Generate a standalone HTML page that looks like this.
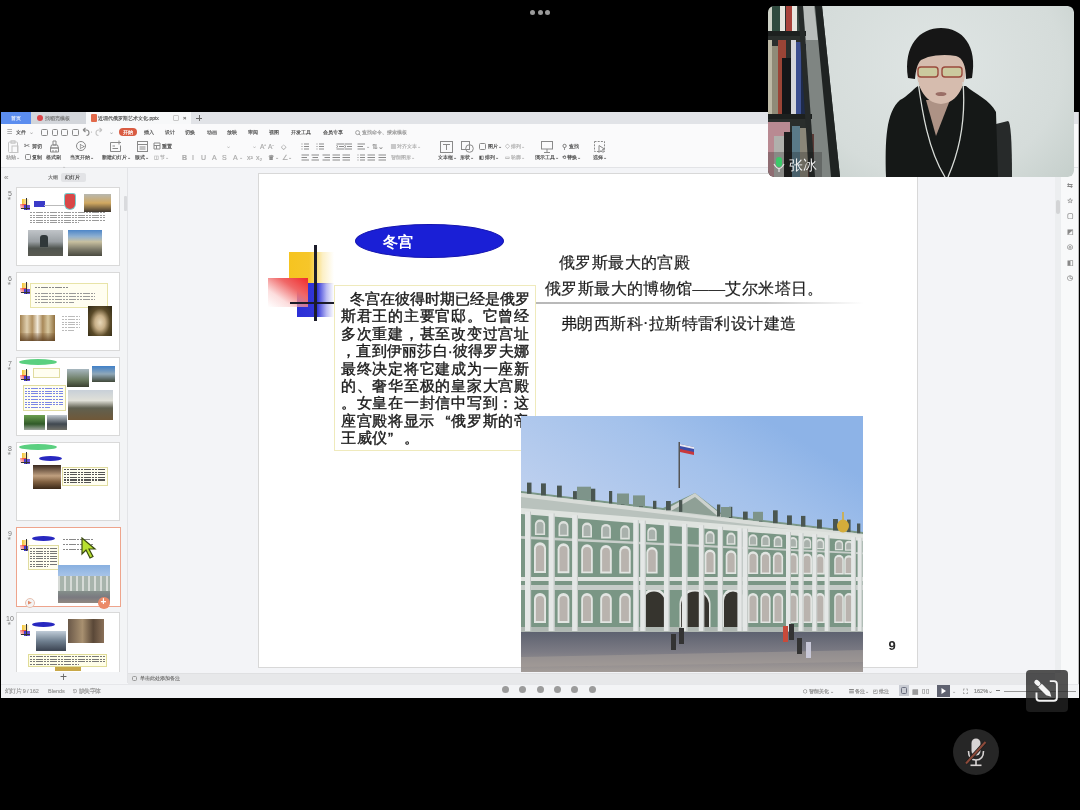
<!DOCTYPE html>
<html><head><meta charset="utf-8">
<style>
*{margin:0;padding:0;box-sizing:border-box}
html,body{width:1080px;height:810px;overflow:hidden;background:#000;font-family:"Liberation Sans",sans-serif}
.a{position:absolute}
.t{line-height:1;white-space:nowrap}
.tb{font-size:15px;font-weight:500;color:#1a1a1a;line-height:17.4px;white-space:nowrap;text-spacing-trim:space-all;-webkit-text-stroke:0.4px #1a1a1a}
.q{display:inline-block;width:15.5px;text-align:center}
.sf{font-family:"Liberation Serif",serif;font-size:16px;color:#1e1e1e;line-height:18px;white-space:nowrap;letter-spacing:0.4px;-webkit-text-stroke:0.2px #1e1e1e}
</style></head><body>
<div class="a" style="left:0;top:0;width:1080px;height:810px;filter:blur(0.3px)">
<div class="a" style="left:529.5px;top:9.7px;width:5px;height:5px;border-radius:50%;background:#9a9a9a"></div>
<div class="a" style="left:537.5px;top:9.7px;width:5px;height:5px;border-radius:50%;background:#9a9a9a"></div>
<div class="a" style="left:545.3px;top:9.7px;width:5px;height:5px;border-radius:50%;background:#9a9a9a"></div>
<div class="a" style="left:1.0px;top:112.0px;width:1078.0px;height:586.0px;background:#f4f5f7;"></div>
<div class="a" style="left:1.0px;top:112.0px;width:1078.0px;height:12.0px;background:#e1e3e7;"></div>
<div class="a" style="left:1.0px;top:112.0px;width:30.0px;height:12.0px;background:#5b8def;"></div>
<div class="a t" style="left:11.0px;top:115.8px;font-size:10.0px;color:#dce6fb;-webkit-text-stroke:0.35px #dce6fb;transform:scale(0.5);transform-origin:0 0;">首页</div>
<div class="a" style="left:31.0px;top:112.0px;width:55.0px;height:12.0px;background:#d3d6db;"></div>
<div class="a" style="left:36.7px;top:114.7px;width:6.6px;height:6.6px;border-radius:50%;background:#dc4448"></div>
<div class="a t" style="left:45.0px;top:115.8px;font-size:10.0px;color:#777;-webkit-text-stroke:0.35px #777;transform:scale(0.5);transform-origin:0 0;">找稻壳模板</div>
<div class="a" style="left:86.0px;top:112.0px;width:105.0px;height:12.0px;background:#f7f8f9;"></div>
<div class="a" style="left:90.5px;top:114.0px;width:6.2px;height:8.0px;background:#e2694a;border-radius:1px"></div>
<div class="a t" style="left:98.0px;top:115.8px;font-size:10.0px;color:#555;-webkit-text-stroke:0.35px #555;transform:scale(0.5);transform-origin:0 0;">近现代俄罗斯艺术文化.pptx</div>
<div class="a" style="left:173.0px;top:115.0px;width:6.0px;height:6.0px;background:transparent;border:1.2px solid #c8c8c8;border-radius:1.5px;border-radius:1px"></div>
<div class="a t" style="left:183.0px;top:115.3px;font-size:12.0px;color:#777;-webkit-text-stroke:0.35px #777;transform:scale(0.5);transform-origin:0 0;">×</div>
<div class="a" style="left:196.0px;top:117.9px;width:6.0px;height:1.0px;background:#666;"></div>
<div class="a" style="left:198.5px;top:115.4px;width:1.0px;height:6.0px;background:#666;"></div>
<div class="a" style="left:1.0px;top:124.0px;width:1078.0px;height:15.0px;background:#fafafb;"></div>
<div class="a t" style="left:7.0px;top:129.2px;font-size:12.0px;color:#888;-webkit-text-stroke:0.35px #888;transform:scale(0.5);transform-origin:0 0;">☰</div>
<div class="a t" style="left:16.0px;top:129.7px;font-size:10.0px;color:#505050;-webkit-text-stroke:0.35px #505050;transform:scale(0.5);transform-origin:0 0;">文件</div>
<div class="a t" style="left:29.4px;top:129.2px;font-size:12.0px;color:#aaa;-webkit-text-stroke:0.35px #aaa;transform:scale(0.5);transform-origin:0 0;">⌄</div>
<div class="a" style="left:40.5px;top:129.0px;width:7.2px;height:6.5px;background:transparent;border:1.2px solid #8a8a8a;border-radius:1.5px;"></div>
<div class="a" style="left:51.7px;top:129.0px;width:6.1px;height:6.5px;background:transparent;border:1.2px solid #8a8a8a;border-radius:1.5px;"></div>
<div class="a" style="left:61.0px;top:129.0px;width:7.3px;height:6.5px;background:transparent;border:1.2px solid #8a8a8a;border-radius:1.5px;"></div>
<div class="a" style="left:72.0px;top:129.0px;width:6.9px;height:6.5px;background:transparent;border:1.2px solid #8a8a8a;border-radius:1.5px;"></div>
<svg class="a" style="left:81px;top:127px" width="24" height="10" viewBox="0 0 24 10"><path d="M2 3 L4.5 1 M2 3 L4.5 5 M2 3 H5.5 Q8 3 8 6 Q8 8.5 5.5 8.5" fill="none" stroke="#888" stroke-width="1.1"/><circle cx="10.5" cy="5" r=".6" fill="#aaa"/><path d="M21 3 L18.5 1 M21 3 L18.5 5 M21 3 H17.5 Q15 3 15 6 Q15 8.5 17.5 8.5" fill="none" stroke="#c5c5c5" stroke-width="1.1"/></svg>
<div class="a t" style="left:109.0px;top:129.2px;font-size:12.0px;color:#aaa;-webkit-text-stroke:0.35px #aaa;transform:scale(0.5);transform-origin:0 0;">⌄</div>
<div class="a" style="left:118.7px;top:128.0px;width:18.0px;height:8.3px;background:#d95b41;border-radius:4.2px"></div>
<div class="a t" style="left:122.5px;top:129.7px;font-size:10.0px;color:#fff;-webkit-text-stroke:0.35px #fff;transform:scale(0.5);transform-origin:0 0;">开始</div>
<div class="a t" style="left:144.0px;top:130.0px;font-size:10.0px;color:#555;-webkit-text-stroke:0.35px #555;transform:scale(0.5);transform-origin:0 0;">插入</div>
<div class="a t" style="left:164.5px;top:130.0px;font-size:10.0px;color:#555;-webkit-text-stroke:0.35px #555;transform:scale(0.5);transform-origin:0 0;">设计</div>
<div class="a t" style="left:184.5px;top:130.0px;font-size:10.0px;color:#555;-webkit-text-stroke:0.35px #555;transform:scale(0.5);transform-origin:0 0;">切换</div>
<div class="a t" style="left:206.5px;top:130.0px;font-size:10.0px;color:#555;-webkit-text-stroke:0.35px #555;transform:scale(0.5);transform-origin:0 0;">动画</div>
<div class="a t" style="left:226.7px;top:130.0px;font-size:10.0px;color:#555;-webkit-text-stroke:0.35px #555;transform:scale(0.5);transform-origin:0 0;">放映</div>
<div class="a t" style="left:247.8px;top:130.0px;font-size:10.0px;color:#555;-webkit-text-stroke:0.35px #555;transform:scale(0.5);transform-origin:0 0;">审阅</div>
<div class="a t" style="left:268.9px;top:130.0px;font-size:10.0px;color:#555;-webkit-text-stroke:0.35px #555;transform:scale(0.5);transform-origin:0 0;">视图</div>
<div class="a t" style="left:291.0px;top:130.0px;font-size:10.0px;color:#555;-webkit-text-stroke:0.35px #555;transform:scale(0.5);transform-origin:0 0;">开发工具</div>
<div class="a t" style="left:323.0px;top:130.0px;font-size:10.0px;color:#555;-webkit-text-stroke:0.35px #555;transform:scale(0.5);transform-origin:0 0;">会员专享</div>
<svg class="a" style="left:355px;top:129.5px" width="6" height="6" viewBox="0 0 6 6"><circle cx="2.6" cy="2.6" r="2" fill="none" stroke="#999" stroke-width=".9"/><path d="M4 4 L5.6 5.6" stroke="#999" stroke-width=".9"/></svg>
<div class="a t" style="left:362.0px;top:130.0px;font-size:10.0px;color:#999;-webkit-text-stroke:0.35px #999;transform:scale(0.5);transform-origin:0 0;">查找命令、搜索模板</div>
<div class="a" style="left:1.0px;top:139.0px;width:1078.0px;height:29.0px;background:#fafafb;border-bottom:1px solid #e2e3e6"></div>
<svg class="a" style="left:7.0px;top:140.0px" width="12" height="13" viewBox="0 0 12 13" fill="none" stroke="#8a8a8a" stroke-width="1"><rect x="1.5" y="2" width="9" height="10.5" rx="1" stroke="#c4c4c4"/><rect x="4" y="0.8" width="4" height="2.4" stroke="#c4c4c4"/><rect x="5" y="6" width="6" height="6.5" stroke="#c4c4c4"/></svg>
<div class="a t" style="left:23.5px;top:142.0px;font-size:14.0px;color:#777;-webkit-text-stroke:0.35px #777;transform:scale(0.5);transform-origin:0 0;">✂</div>
<div class="a t" style="left:32.0px;top:143.5px;font-size:10.0px;color:#505050;-webkit-text-stroke:0.35px #505050;transform:scale(0.5);transform-origin:0 0;">剪切</div>
<svg class="a" style="left:49.0px;top:140.0px" width="11" height="13" viewBox="0 0 11 13" fill="none" stroke="#8a8a8a" stroke-width="1"><path d="M4 1 H7 V5 H4 Z M2.5 5 H8.5 L9.5 8 H1.5 Z M1.5 8 H9.5 V12 H1.5 Z M4 12 V10 M7 12 V10"/></svg>
<div class="a" style="left:76.4px;top:141.0px;width:10.0px;height:10.0px;background:transparent;border:1.2px solid #8a8a8a;border-radius:50%"></div>
<div class="a t" style="left:79.5px;top:143.0px;font-size:12.0px;color:#777;-webkit-text-stroke:0.35px #777;transform:scale(0.5);transform-origin:0 0;">▷</div>
<svg class="a" style="left:109.0px;top:140.0px" width="13" height="13" viewBox="0 0 13 13" fill="none" stroke="#8a8a8a" stroke-width="1"><path d="M9 2.5 H1.5 V11.5 H11.5 V5.5"/><path d="M10 0.5 V4.5 M8 2.5 H12"/><path d="M3.5 6 H6 M3.5 8.5 H9"/></svg>
<svg class="a" style="left:136.0px;top:140.0px" width="13" height="13" viewBox="0 0 13 13" fill="none" stroke="#8a8a8a" stroke-width="1"><rect x="1.5" y="1.5" width="10" height="10"/><path d="M1.5 4.5 H11.5 M3.5 7 H9.5 M3.5 9 H9.5"/></svg>
<svg class="a" style="left:153.0px;top:142.0px" width="8" height="8" viewBox="0 0 8 8" fill="none" stroke="#8a8a8a" stroke-width="1"><path d="M1 1 H7 V7 H1 Z M1 3.5 H7 M3.5 3.5 V7"/></svg>
<div class="a t" style="left:161.5px;top:143.5px;font-size:10.0px;color:#505050;-webkit-text-stroke:0.35px #505050;transform:scale(0.5);transform-origin:0 0;">重置</div>
<div class="a t" style="left:226.0px;top:143.0px;font-size:12.0px;color:#bbb;-webkit-text-stroke:0.35px #bbb;transform:scale(0.5);transform-origin:0 0;">⌄</div>
<div class="a t" style="left:252.0px;top:143.0px;font-size:12.0px;color:#bbb;-webkit-text-stroke:0.35px #bbb;transform:scale(0.5);transform-origin:0 0;">⌄</div>
<div class="a t" style="left:259.5px;top:142.8px;font-size:13.0px;color:#aaa;-webkit-text-stroke:0.35px #aaa;transform:scale(0.5);transform-origin:0 0;">A⁺</div>
<div class="a t" style="left:268.0px;top:142.8px;font-size:13.0px;color:#aaa;-webkit-text-stroke:0.35px #aaa;transform:scale(0.5);transform-origin:0 0;">A⁻</div>
<div class="a t" style="left:281.0px;top:142.8px;font-size:13.0px;color:#aaa;-webkit-text-stroke:0.35px #aaa;transform:scale(0.5);transform-origin:0 0;">◇</div>
<svg class="a" style="left:301.0px;top:142.5px" width="9" height="7" viewBox="0 0 9 7" fill="none" stroke="#8a8a8a" stroke-width="1"><path d="M0.5 1 H1.5 M3 1 H8 M0.5 3.5 H1.5 M3 3.5 H8 M0.5 6 H1.5 M3 6 H8"/></svg>
<svg class="a" style="left:316.0px;top:142.5px" width="9" height="7" viewBox="0 0 9 7" fill="none" stroke="#8a8a8a" stroke-width="1"><path d="M0.5 1 H1.5 M3 1 H8 M0.5 3.5 H1.5 M3 3.5 H8 M0.5 6 H1.5 M3 6 H8"/></svg>
<svg class="a" style="left:336.0px;top:142.5px" width="9" height="7" viewBox="0 0 9 7" fill="none" stroke="#8a8a8a" stroke-width="1"><path d="M0.5 1 H8 M3 3.5 H8 M0.5 6 H8 M0.5 2.5 L2 3.5 L0.5 4.5"/></svg>
<svg class="a" style="left:344.0px;top:142.5px" width="9" height="7" viewBox="0 0 9 7" fill="none" stroke="#8a8a8a" stroke-width="1"><path d="M0.5 1 H8 M3 3.5 H8 M0.5 6 H8 M0.5 2.5 L2 3.5 L0.5 4.5"/></svg>
<svg class="a" style="left:357.0px;top:142.5px" width="9" height="7" viewBox="0 0 9 7" fill="none" stroke="#8a8a8a" stroke-width="1"><path d="M0.5 1 H8 M0.5 3.5 H6 M0.5 6 H8"/></svg>
<div class="a t" style="left:366.0px;top:143.5px;font-size:10.0px;color:#999;-webkit-text-stroke:0.35px #999;transform:scale(0.5);transform-origin:0 0;">⌄</div>
<div class="a t" style="left:372.0px;top:142.8px;font-size:13.0px;color:#888;-webkit-text-stroke:0.35px #888;transform:scale(0.5);transform-origin:0 0;">⇅⌄</div>
<div class="a t" style="left:391.0px;top:143.5px;font-size:10.0px;color:#b0b0b0;-webkit-text-stroke:0.35px #b0b0b0;transform:scale(0.5);transform-origin:0 0;">▤ 对齐文本⌄</div>
<svg class="a" style="left:439.5px;top:140.5px" width="13" height="12" viewBox="0 0 13 12" fill="none" stroke="#8a8a8a" stroke-width="1"><rect x="0.5" y="0.5" width="12" height="11"/><path d="M3 3.5 H10 M6.5 3.5 V9"/></svg>
<svg class="a" style="left:461.0px;top:140.5px" width="13" height="12" viewBox="0 0 13 12" fill="none" stroke="#8a8a8a" stroke-width="1"><rect x="0.5" y="0.5" width="8" height="8"/><circle cx="8.5" cy="7.5" r="3.8"/></svg>
<div class="a" style="left:478.5px;top:143.0px;width:7.5px;height:6.5px;background:transparent;border:1.2px solid #8a8a8a;border-radius:1.5px;"></div>
<div class="a t" style="left:488.0px;top:143.5px;font-size:10.0px;color:#505050;-webkit-text-stroke:0.35px #505050;transform:scale(0.5);transform-origin:0 0;">图片⌄</div>
<div class="a t" style="left:505.0px;top:143.5px;font-size:10.0px;color:#b0b0b0;-webkit-text-stroke:0.35px #b0b0b0;transform:scale(0.5);transform-origin:0 0;">◇ 排列⌄</div>
<svg class="a" style="left:540.5px;top:140.5px" width="12" height="12" viewBox="0 0 12 12" fill="none" stroke="#8a8a8a" stroke-width="1"><rect x="0.5" y="0.5" width="11" height="7.5"/><path d="M6 8 V11.5 M3 11.5 H9"/></svg>
<div class="a t" style="left:562.0px;top:142.8px;font-size:13.0px;color:#777;-webkit-text-stroke:0.35px #777;transform:scale(0.5);transform-origin:0 0;">⚲</div>
<div class="a t" style="left:569.0px;top:143.5px;font-size:10.0px;color:#505050;-webkit-text-stroke:0.35px #505050;transform:scale(0.5);transform-origin:0 0;">查找</div>
<svg class="a" style="left:594.0px;top:140.5px" width="12" height="12" viewBox="0 0 12 12" fill="none" stroke="#8a8a8a" stroke-width="1"><rect x="0.5" y="0.5" width="10" height="10" stroke-dasharray="2 1.2"/><path d="M5 4.5 L5 11.5 L7 9.5 L9 11.5 L10 10.5 L8.2 8.8 L10.5 8 Z" fill="#fafafb"/></svg>
<div class="a t" style="left:6.0px;top:154.5px;font-size:10.0px;color:#999;-webkit-text-stroke:0.35px #999;transform:scale(0.5);transform-origin:0 0;">粘贴⌄</div>
<div class="a t" style="left:32.0px;top:154.5px;font-size:10.0px;color:#505050;-webkit-text-stroke:0.35px #505050;transform:scale(0.5);transform-origin:0 0;">复制</div>
<div class="a t" style="left:46.0px;top:154.5px;font-size:10.0px;color:#505050;-webkit-text-stroke:0.35px #505050;transform:scale(0.5);transform-origin:0 0;">格式刷</div>
<div class="a t" style="left:69.6px;top:154.5px;font-size:10.0px;color:#505050;-webkit-text-stroke:0.35px #505050;transform:scale(0.5);transform-origin:0 0;">当页开始⌄</div>
<div class="a t" style="left:102.0px;top:154.5px;font-size:10.0px;color:#505050;-webkit-text-stroke:0.35px #505050;transform:scale(0.5);transform-origin:0 0;">新建幻灯片⌄</div>
<div class="a t" style="left:135.0px;top:154.5px;font-size:10.0px;color:#505050;-webkit-text-stroke:0.35px #505050;transform:scale(0.5);transform-origin:0 0;">版式⌄</div>
<div class="a t" style="left:154.0px;top:154.5px;font-size:10.0px;color:#b0b0b0;-webkit-text-stroke:0.35px #b0b0b0;transform:scale(0.5);transform-origin:0 0;">◫ 节⌄</div>
<div class="a t" style="left:391.0px;top:154.5px;font-size:10.0px;color:#b0b0b0;-webkit-text-stroke:0.35px #b0b0b0;transform:scale(0.5);transform-origin:0 0;">智能图形⌄</div>
<div class="a t" style="left:437.8px;top:154.5px;font-size:10.0px;color:#505050;-webkit-text-stroke:0.35px #505050;transform:scale(0.5);transform-origin:0 0;">文本框⌄</div>
<div class="a t" style="left:460.0px;top:154.5px;font-size:10.0px;color:#505050;-webkit-text-stroke:0.35px #505050;transform:scale(0.5);transform-origin:0 0;">形状⌄</div>
<div class="a t" style="left:478.5px;top:154.5px;font-size:10.0px;color:#505050;-webkit-text-stroke:0.35px #505050;transform:scale(0.5);transform-origin:0 0;">◧ 排列⌄</div>
<div class="a t" style="left:505.0px;top:154.5px;font-size:10.0px;color:#b0b0b0;-webkit-text-stroke:0.35px #b0b0b0;transform:scale(0.5);transform-origin:0 0;">▭ 轮廓⌄</div>
<div class="a t" style="left:534.7px;top:154.5px;font-size:10.0px;color:#505050;-webkit-text-stroke:0.35px #505050;transform:scale(0.5);transform-origin:0 0;">演示工具⌄</div>
<div class="a t" style="left:562.0px;top:154.5px;font-size:10.0px;color:#505050;-webkit-text-stroke:0.35px #505050;transform:scale(0.5);transform-origin:0 0;">⟲ 替换⌄</div>
<div class="a t" style="left:592.6px;top:154.5px;font-size:10.0px;color:#505050;-webkit-text-stroke:0.35px #505050;transform:scale(0.5);transform-origin:0 0;">选择⌄</div>
<div class="a" style="left:24.5px;top:153.5px;width:6.0px;height:6.5px;background:transparent;border:1.2px solid #8a8a8a;border-radius:1.5px;"></div>
<div class="a t" style="left:182.0px;top:153.5px;font-size:14.0px;color:#aaa;-webkit-text-stroke:0.35px #aaa;transform:scale(0.5);transform-origin:0 0;font-weight:bold">B</div>
<div class="a t" style="left:192.0px;top:153.5px;font-size:14.0px;color:#aaa;-webkit-text-stroke:0.35px #aaa;transform:scale(0.5);transform-origin:0 0;">I</div>
<div class="a t" style="left:201.0px;top:153.5px;font-size:14.0px;color:#aaa;-webkit-text-stroke:0.35px #aaa;transform:scale(0.5);transform-origin:0 0;">U</div>
<div class="a t" style="left:212.0px;top:153.5px;font-size:14.0px;color:#aaa;-webkit-text-stroke:0.35px #aaa;transform:scale(0.5);transform-origin:0 0;">A</div>
<div class="a t" style="left:222.0px;top:153.5px;font-size:14.0px;color:#aaa;-webkit-text-stroke:0.35px #aaa;transform:scale(0.5);transform-origin:0 0;">S</div>
<div class="a t" style="left:233.0px;top:153.5px;font-size:14.0px;color:#aaa;-webkit-text-stroke:0.35px #aaa;transform:scale(0.5);transform-origin:0 0;">A</div>
<div class="a t" style="left:247.0px;top:153.5px;font-size:14.0px;color:#aaa;-webkit-text-stroke:0.35px #aaa;transform:scale(0.5);transform-origin:0 0;">x²</div>
<div class="a t" style="left:256.0px;top:153.5px;font-size:14.0px;color:#aaa;-webkit-text-stroke:0.35px #aaa;transform:scale(0.5);transform-origin:0 0;">x₂</div>
<div class="a t" style="left:239.0px;top:154.5px;font-size:10.0px;color:#aaa;-webkit-text-stroke:0.35px #aaa;transform:scale(0.5);transform-origin:0 0;">⌄</div>
<div class="a t" style="left:268.0px;top:153.5px;font-size:14.0px;color:#777;-webkit-text-stroke:0.35px #777;transform:scale(0.5);transform-origin:0 0;">♛</div>
<div class="a t" style="left:275.0px;top:154.5px;font-size:10.0px;color:#999;-webkit-text-stroke:0.35px #999;transform:scale(0.5);transform-origin:0 0;">⌄</div>
<div class="a t" style="left:282.0px;top:153.5px;font-size:14.0px;color:#aaa;-webkit-text-stroke:0.35px #aaa;transform:scale(0.5);transform-origin:0 0;">∠</div>
<div class="a t" style="left:288.0px;top:154.5px;font-size:10.0px;color:#999;-webkit-text-stroke:0.35px #999;transform:scale(0.5);transform-origin:0 0;">⌄</div>
<svg class="a" style="left:301.0px;top:153.5px" width="9" height="7" viewBox="0 0 9 7" fill="none" stroke="#8a8a8a" stroke-width="1"><path d="M0.5 1 H8 M0.5 3.5 H6 M0.5 6 H8"/></svg>
<svg class="a" style="left:311.0px;top:153.5px" width="9" height="7" viewBox="0 0 9 7" fill="none" stroke="#8a8a8a" stroke-width="1"><path d="M0.5 1 H8 M1.5 3.5 H7 M0.5 6 H8"/></svg>
<svg class="a" style="left:322.0px;top:153.5px" width="9" height="7" viewBox="0 0 9 7" fill="none" stroke="#8a8a8a" stroke-width="1"><path d="M0.5 1 H8 M2.5 3.5 H8 M0.5 6 H8"/></svg>
<svg class="a" style="left:332.0px;top:153.5px" width="9" height="7" viewBox="0 0 9 7" fill="none" stroke="#8a8a8a" stroke-width="1"><path d="M0.5 1 H8 M0.5 3.5 H8 M0.5 6 H8"/></svg>
<svg class="a" style="left:342.0px;top:153.5px" width="9" height="7" viewBox="0 0 9 7" fill="none" stroke="#8a8a8a" stroke-width="1"><path d="M0.5 1 H8 M0.5 3.5 H8 M0.5 6 H8"/></svg>
<svg class="a" style="left:357.0px;top:153.5px" width="9" height="7" viewBox="0 0 9 7" fill="none" stroke="#8a8a8a" stroke-width="1"><path d="M0.5 1 H1.5 M3 1 H8 M0.5 3.5 H1.5 M3 3.5 H8 M0.5 6 H1.5 M3 6 H8"/></svg>
<svg class="a" style="left:367.0px;top:153.5px" width="9" height="7" viewBox="0 0 9 7" fill="none" stroke="#8a8a8a" stroke-width="1"><path d="M0.5 1 H8 M0.5 3.5 H8 M0.5 6 H8"/></svg>
<svg class="a" style="left:378.0px;top:153.5px" width="9" height="7" viewBox="0 0 9 7" fill="none" stroke="#8a8a8a" stroke-width="1"><path d="M0.5 1 H8 M0.5 3.5 H8 M0.5 6 H8"/></svg>
<div class="a t" style="left:62.0px;top:163.5px;font-size:10.0px;color:#bbb;-webkit-text-stroke:0.35px #bbb;transform:scale(0.5);transform-origin:0 0;">⌄</div>
<div class="a" style="left:1.0px;top:168.0px;width:127.0px;height:515.0px;background:#f3f4f6;border-right:1px solid #e3e4e7"></div>
<div class="a t" style="left:4.0px;top:172.5px;font-size:16.0px;color:#999;-webkit-text-stroke:0.35px #999;transform:scale(0.5);transform-origin:0 0;">«</div>
<div class="a t" style="left:48.0px;top:175.0px;font-size:10.0px;color:#777;-webkit-text-stroke:0.35px #777;transform:scale(0.5);transform-origin:0 0;">大纲</div>
<div class="a" style="left:61.0px;top:173.0px;width:25.0px;height:9.0px;background:#e2e3e6;border-radius:2px"></div>
<div class="a t" style="left:65.0px;top:175.0px;font-size:10.0px;color:#505050;-webkit-text-stroke:0.35px #505050;transform:scale(0.5);transform-origin:0 0;">幻灯片</div>
<div class="a" style="left:124.0px;top:196.0px;width:2.5px;height:15.0px;background:#d9dadd;border-radius:1px"></div>
<div class="a" style="left:128.0px;top:168.0px;width:927.0px;height:505.0px;background:#f3f4f7;"></div>
<div class="a" style="left:128.0px;top:673.0px;width:927.0px;height:11.0px;background:#e7e8ea;border-top:1px solid #dfe0e2"></div>
<div class="a" style="left:131.5px;top:675.8px;width:5.0px;height:5.0px;background:transparent;border:1.2px solid #999;border-radius:1.5px;"></div>
<div class="a t" style="left:140.0px;top:676.0px;font-size:10.0px;color:#777;-webkit-text-stroke:0.35px #777;transform:scale(0.5);transform-origin:0 0;">单击此处添加备注</div>
<div class="a" style="left:1055.0px;top:168.0px;width:24.0px;height:516.0px;background:#f8f9fa;"></div>
<div class="a" style="left:1055.0px;top:168.0px;width:6.0px;height:505.0px;background:#eceef0;"></div>
<div class="a" style="left:1056.0px;top:200.0px;width:4.0px;height:14.0px;background:#d3d4d6;border-radius:2px"></div>
<div class="a t" style="left:1067.0px;top:181.5px;font-size:14.0px;color:#888;-webkit-text-stroke:0.35px #888;transform:scale(0.5);transform-origin:0 0;">⇆</div>
<div class="a t" style="left:1067.0px;top:196.9px;font-size:14.0px;color:#888;-webkit-text-stroke:0.35px #888;transform:scale(0.5);transform-origin:0 0;">☆</div>
<div class="a t" style="left:1067.0px;top:212.3px;font-size:14.0px;color:#888;-webkit-text-stroke:0.35px #888;transform:scale(0.5);transform-origin:0 0;">▢</div>
<div class="a t" style="left:1067.0px;top:227.7px;font-size:14.0px;color:#888;-webkit-text-stroke:0.35px #888;transform:scale(0.5);transform-origin:0 0;">◩</div>
<div class="a t" style="left:1067.0px;top:243.1px;font-size:14.0px;color:#888;-webkit-text-stroke:0.35px #888;transform:scale(0.5);transform-origin:0 0;">◎</div>
<div class="a t" style="left:1067.0px;top:258.5px;font-size:14.0px;color:#888;-webkit-text-stroke:0.35px #888;transform:scale(0.5);transform-origin:0 0;">◧</div>
<div class="a t" style="left:1067.0px;top:273.9px;font-size:14.0px;color:#888;-webkit-text-stroke:0.35px #888;transform:scale(0.5);transform-origin:0 0;">◷</div>
<div class="a" style="left:1078.0px;top:112.0px;width:1.0px;height:586.0px;background:#bdbdbd;"></div>
<div class="a" style="left:1.0px;top:684.0px;width:1078.0px;height:14.0px;background:#f3f4f6;border-top:1px solid #e6e7ea"></div>
<div class="a t" style="left:5.0px;top:688.2px;font-size:11.0px;color:#9a9a9a;-webkit-text-stroke:0.35px #9a9a9a;transform:scale(0.5);transform-origin:0 0;letter-spacing:-0.2px">幻灯片 9 / 162</div>
<div class="a t" style="left:48.0px;top:688.2px;font-size:11.0px;color:#9a9a9a;-webkit-text-stroke:0.35px #9a9a9a;transform:scale(0.5);transform-origin:0 0;">Blends</div>
<div class="a t" style="left:73.0px;top:688.2px;font-size:11.0px;color:#9a9a9a;-webkit-text-stroke:0.35px #9a9a9a;transform:scale(0.5);transform-origin:0 0;">⅁ 缺失字体</div>
<div class="a" style="left:501.6px;top:685.5px;width:7px;height:7px;border-radius:50%;background:#9b9b9b"></div>
<div class="a" style="left:519.2px;top:685.5px;width:7px;height:7px;border-radius:50%;background:#9b9b9b"></div>
<div class="a" style="left:536.5px;top:685.5px;width:7px;height:7px;border-radius:50%;background:#9b9b9b"></div>
<div class="a" style="left:553.8px;top:685.5px;width:7px;height:7px;border-radius:50%;background:#9b9b9b"></div>
<div class="a" style="left:571.4px;top:685.5px;width:7px;height:7px;border-radius:50%;background:#9b9b9b"></div>
<div class="a" style="left:589.1px;top:685.5px;width:7px;height:7px;border-radius:50%;background:#9b9b9b"></div>
<div class="a t" style="left:803.0px;top:688.5px;font-size:10.0px;color:#888;-webkit-text-stroke:0.35px #888;transform:scale(0.5);transform-origin:0 0;">⬡ 智能美化 ⌄</div>
<div class="a t" style="left:849.0px;top:688.5px;font-size:10.0px;color:#888;-webkit-text-stroke:0.35px #888;transform:scale(0.5);transform-origin:0 0;">☰ 备注⌄</div>
<div class="a t" style="left:873.0px;top:688.5px;font-size:10.0px;color:#888;-webkit-text-stroke:0.35px #888;transform:scale(0.5);transform-origin:0 0;">◰ 批注</div>
<div class="a" style="left:899.0px;top:685.0px;width:10.0px;height:11.0px;background:#c9ccd3;"></div>
<div class="a" style="left:901.0px;top:687.0px;width:6.0px;height:7.0px;background:transparent;border:1.2px solid #6c7080;border-radius:1.5px;"></div>
<div class="a t" style="left:911.5px;top:687.5px;font-size:14.0px;color:#888;-webkit-text-stroke:0.35px #888;transform:scale(0.5);transform-origin:0 0;">▦</div>
<div class="a t" style="left:921.5px;top:688.0px;font-size:12.0px;color:#888;-webkit-text-stroke:0.35px #888;transform:scale(0.5);transform-origin:0 0;">▯▯</div>
<div class="a" style="left:936.7px;top:685.0px;width:13.3px;height:12.0px;background:#5f6270;"></div>
<svg class="a" style="left:940px;top:687px" width="7" height="8" viewBox="0 0 7 8"><path d="M1.5 1 L6 4 L1.5 7 Z" fill="#fff"/></svg>
<div class="a t" style="left:952.0px;top:688.5px;font-size:10.0px;color:#999;-webkit-text-stroke:0.35px #999;transform:scale(0.5);transform-origin:0 0;">⌄</div>
<div class="a t" style="left:963.0px;top:687.5px;font-size:14.0px;color:#888;-webkit-text-stroke:0.35px #888;transform:scale(0.5);transform-origin:0 0;">⛶</div>
<div class="a t" style="left:974.0px;top:688.2px;font-size:11.0px;color:#888;-webkit-text-stroke:0.35px #888;transform:scale(0.5);transform-origin:0 0;">162%⌄</div>
<div class="a" style="left:996.0px;top:690.0px;width:4.0px;height:1.2px;background:#777;"></div>
<div class="a" style="left:1004.0px;top:690.5px;width:72.0px;height:0.8px;background:#999;"></div>
<div class="a" style="left:16.0px;top:187.0px;width:104.0px;height:79.0px;background:#fff;border:1px solid #d9d9d9"></div>
<div class="a t" style="left:8.0px;top:190.0px;font-size:7px;color:#777;">5</div>
<div class="a t" style="left:7.0px;top:196.0px;font-size:5px;color:#999;">★</div>
<div class="a" style="left:16.0px;top:272.0px;width:104.0px;height:79.0px;background:#fff;border:1px solid #d9d9d9"></div>
<div class="a t" style="left:8.0px;top:275.0px;font-size:7px;color:#777;">6</div>
<div class="a t" style="left:7.0px;top:281.0px;font-size:5px;color:#999;">★</div>
<div class="a" style="left:16.0px;top:357.0px;width:104.0px;height:79.0px;background:#fff;border:1px solid #d9d9d9"></div>
<div class="a t" style="left:8.0px;top:360.0px;font-size:7px;color:#777;">7</div>
<div class="a t" style="left:7.0px;top:366.0px;font-size:5px;color:#999;">★</div>
<div class="a" style="left:16.0px;top:442.0px;width:104.0px;height:79.0px;background:#fff;border:1px solid #d9d9d9"></div>
<div class="a t" style="left:8.0px;top:445.0px;font-size:7px;color:#777;">8</div>
<div class="a t" style="left:7.0px;top:451.0px;font-size:5px;color:#999;">★</div>
<div class="a" style="left:15.5px;top:526.5px;width:105.0px;height:80.0px;background:#fff;border:1.5px solid #eea48c"></div>
<div class="a t" style="left:8.0px;top:530.0px;font-size:7px;color:#777;">9</div>
<div class="a t" style="left:7.0px;top:536.0px;font-size:5px;color:#999;">★</div>
<div class="a" style="left:16px;top:612px;width:104px;height:60px;overflow:hidden">
<div class="a" style="left:0;top:0;width:104px;height:79px;background:#fff;border:1px solid #d9d9d9"></div></div>
<div class="a t" style="left:6.0px;top:615.0px;font-size:7px;color:#777;">10</div>
<div class="a t" style="left:7.0px;top:621.0px;font-size:5px;color:#999;">★</div>
<div class="a" style="left:22.0px;top:199.0px;width:7.0px;height:6.0px;background:linear-gradient(90deg,#f4c430,rgba(255,240,200,.4));"></div><div class="a" style="left:20.0px;top:204.0px;width:6.0px;height:5.0px;background:linear-gradient(225deg,#f03030,rgba(255,220,220,.3));"></div><div class="a" style="left:24.0px;top:205.0px;width:6.0px;height:5.0px;background:linear-gradient(90deg,#3a3ad0,#7a5ad8);"></div><div class="a" style="left:25.5px;top:198.0px;width:0.8px;height:12.0px;background:#333;"></div><div class="a" style="left:21.0px;top:207.5px;width:9.0px;height:0.8px;background:#333;"></div>
<div class="a" style="left:34.0px;top:201.0px;width:11.0px;height:6.0px;background:#3b3bc8;"></div>
<div class="a" style="left:44.0px;top:205.0px;width:20.0px;height:0.8px;background:#bbb;"></div>
<div class="a" style="left:65.0px;top:194.0px;width:10.0px;height:15.0px;background:#d84848;border-radius:2px 2px 5px 5px;box-shadow:0 0 0 1px #7cc"></div>
<div class="a" style="left:83.5px;top:194.0px;width:27.0px;height:18.0px;background:linear-gradient(180deg,#b8b8b0 0%,#d0a860 50%,#403830 100%);"></div>
<div class="a" style="left:30.0px;top:212.0px;width:75.0px;height:1.0px;background:repeating-linear-gradient(90deg,#9a9a9a 0 2.2px,transparent 2.2px 2.8px);"></div><div class="a" style="left:30.0px;top:214.6px;width:75.0px;height:1.0px;background:repeating-linear-gradient(90deg,#9a9a9a 0 2.2px,transparent 2.2px 2.8px);"></div><div class="a" style="left:30.0px;top:217.2px;width:75.0px;height:1.0px;background:repeating-linear-gradient(90deg,#9a9a9a 0 2.2px,transparent 2.2px 2.8px);"></div><div class="a" style="left:30.0px;top:219.8px;width:75.0px;height:1.0px;background:repeating-linear-gradient(90deg,#9a9a9a 0 2.2px,transparent 2.2px 2.8px);"></div><div class="a" style="left:30.0px;top:222.4px;width:48.8px;height:1.0px;background:repeating-linear-gradient(90deg,#9a9a9a 0 2.2px,transparent 2.2px 2.8px);"></div>
<div class="a" style="left:28.0px;top:230.0px;width:35.0px;height:26.0px;background:linear-gradient(180deg,#c0c4c8 0%,#9aa0a4 45%,#505550 70%,#5a5a52 100%);"></div>
<div class="a" style="left:40.0px;top:235.0px;width:8.0px;height:12.0px;background:#30383a;border-radius:3px 3px 0 0"></div>
<div class="a" style="left:68.0px;top:230.0px;width:34.0px;height:26.0px;background:linear-gradient(180deg,#4d86c8 0%,#8fb0d0 25%,#c8c0a0 45%,#7a7868 75%,#4a4a40 100%);"></div>
<div class="a" style="left:22.0px;top:283.0px;width:7.0px;height:6.0px;background:linear-gradient(90deg,#f4c430,rgba(255,240,200,.4));"></div><div class="a" style="left:20.0px;top:288.0px;width:6.0px;height:5.0px;background:linear-gradient(225deg,#f03030,rgba(255,220,220,.3));"></div><div class="a" style="left:24.0px;top:289.0px;width:6.0px;height:5.0px;background:linear-gradient(90deg,#3a3ad0,#7a5ad8);"></div><div class="a" style="left:25.5px;top:282.0px;width:0.8px;height:12.0px;background:#333;"></div><div class="a" style="left:21.0px;top:291.5px;width:9.0px;height:0.8px;background:#333;"></div>
<div class="a" style="left:30.0px;top:283.0px;width:78.0px;height:25.0px;background:#fffef0;border:1px solid #e8e4a8"></div>
<div class="a" style="left:35.0px;top:287.0px;width:32.5px;height:1.0px;background:repeating-linear-gradient(90deg,#888 0 2.2px,transparent 2.2px 2.8px);"></div>
<div class="a" style="left:35.0px;top:293.0px;width:60.0px;height:1.0px;background:repeating-linear-gradient(90deg,#999 0 2.2px,transparent 2.2px 2.8px);"></div><div class="a" style="left:35.0px;top:296.0px;width:60.0px;height:1.0px;background:repeating-linear-gradient(90deg,#999 0 2.2px,transparent 2.2px 2.8px);"></div><div class="a" style="left:35.0px;top:299.0px;width:60.0px;height:1.0px;background:repeating-linear-gradient(90deg,#999 0 2.2px,transparent 2.2px 2.8px);"></div><div class="a" style="left:35.0px;top:302.0px;width:39.0px;height:1.0px;background:repeating-linear-gradient(90deg,#999 0 2.2px,transparent 2.2px 2.8px);"></div>
<div class="a" style="left:20.0px;top:315.0px;width:35.0px;height:26.0px;background:linear-gradient(90deg,#a08050 0%,#e0d0b0 20%,#b09060 35%,#f0e8d8 50%,#a88858 65%,#d8c8a0 80%,#907040 100%);"></div>
<div class="a" style="left:20.0px;top:333.0px;width:35.0px;height:8.0px;background:linear-gradient(180deg,rgba(120,80,40,.2),rgba(90,60,30,.8));"></div>
<div class="a" style="left:62.0px;top:316.0px;width:18.0px;height:1.0px;background:repeating-linear-gradient(90deg,#bbb 0 2.2px,transparent 2.2px 2.8px);"></div><div class="a" style="left:62.0px;top:318.8px;width:18.0px;height:1.0px;background:repeating-linear-gradient(90deg,#bbb 0 2.2px,transparent 2.2px 2.8px);"></div><div class="a" style="left:62.0px;top:321.6px;width:18.0px;height:1.0px;background:repeating-linear-gradient(90deg,#bbb 0 2.2px,transparent 2.2px 2.8px);"></div><div class="a" style="left:62.0px;top:324.4px;width:18.0px;height:1.0px;background:repeating-linear-gradient(90deg,#bbb 0 2.2px,transparent 2.2px 2.8px);"></div><div class="a" style="left:62.0px;top:327.2px;width:18.0px;height:1.0px;background:repeating-linear-gradient(90deg,#bbb 0 2.2px,transparent 2.2px 2.8px);"></div><div class="a" style="left:62.0px;top:330.0px;width:11.7px;height:1.0px;background:repeating-linear-gradient(90deg,#bbb 0 2.2px,transparent 2.2px 2.8px);"></div>
<div class="a" style="left:88.0px;top:306.0px;width:24.0px;height:30.0px;background:radial-gradient(ellipse at 50% 55%,#e8d8b8 0%,#c8b088 30%,#5a4a28 60%,#2e2814 100%);"></div>
<div class="a" style="left:19.0px;top:359.0px;width:38.0px;height:6.0px;background:#5bd080;border-radius:50%"></div>
<div class="a" style="left:22.0px;top:370.0px;width:7.0px;height:6.0px;background:linear-gradient(90deg,#f4c430,rgba(255,240,200,.4));"></div><div class="a" style="left:20.0px;top:375.0px;width:6.0px;height:5.0px;background:linear-gradient(225deg,#f03030,rgba(255,220,220,.3));"></div><div class="a" style="left:24.0px;top:376.0px;width:6.0px;height:5.0px;background:linear-gradient(90deg,#3a3ad0,#7a5ad8);"></div><div class="a" style="left:25.5px;top:369.0px;width:0.8px;height:12.0px;background:#333;"></div><div class="a" style="left:21.0px;top:378.5px;width:9.0px;height:0.8px;background:#333;"></div>
<div class="a" style="left:33.0px;top:368.0px;width:27.0px;height:10.0px;background:#fffef0;border:1px solid #e0dca0"></div>
<div class="a" style="left:67.0px;top:369.0px;width:22.0px;height:18.0px;background:linear-gradient(180deg,#a8b8c0,#6a7a60 60%,#3a4030);"></div>
<div class="a" style="left:92.0px;top:366.0px;width:23.0px;height:16.0px;background:linear-gradient(180deg,#4080c8,#90a8b8 50%,#404838);"></div>
<div class="a" style="left:23.0px;top:385.0px;width:43.0px;height:26.0px;background:#fffef0;border:1px solid #e0dca0"></div>
<div class="a" style="left:25.0px;top:388.0px;width:38.0px;height:1.0px;background:repeating-linear-gradient(90deg,#7a86e6 0 2.2px,transparent 2.2px 2.8px);"></div><div class="a" style="left:25.0px;top:390.7px;width:38.0px;height:1.0px;background:repeating-linear-gradient(90deg,#7a86e6 0 2.2px,transparent 2.2px 2.8px);"></div><div class="a" style="left:25.0px;top:393.4px;width:38.0px;height:1.0px;background:repeating-linear-gradient(90deg,#7a86e6 0 2.2px,transparent 2.2px 2.8px);"></div><div class="a" style="left:25.0px;top:396.1px;width:38.0px;height:1.0px;background:repeating-linear-gradient(90deg,#7a86e6 0 2.2px,transparent 2.2px 2.8px);"></div><div class="a" style="left:25.0px;top:398.8px;width:38.0px;height:1.0px;background:repeating-linear-gradient(90deg,#7a86e6 0 2.2px,transparent 2.2px 2.8px);"></div><div class="a" style="left:25.0px;top:401.5px;width:38.0px;height:1.0px;background:repeating-linear-gradient(90deg,#7a86e6 0 2.2px,transparent 2.2px 2.8px);"></div><div class="a" style="left:25.0px;top:404.2px;width:38.0px;height:1.0px;background:repeating-linear-gradient(90deg,#7a86e6 0 2.2px,transparent 2.2px 2.8px);"></div><div class="a" style="left:25.0px;top:406.9px;width:24.7px;height:1.0px;background:repeating-linear-gradient(90deg,#7a86e6 0 2.2px,transparent 2.2px 2.8px);"></div>
<div class="a" style="left:68.0px;top:390.0px;width:45.0px;height:30.0px;background:linear-gradient(180deg,#c8d0d8 0%,#e0e0d8 35%,#606050 60%,#705838 100%);"></div>
<div class="a" style="left:24.0px;top:415.0px;width:21.0px;height:15.0px;background:linear-gradient(180deg,#6ca050,#305a28 60%,#a0a8a0);"></div>
<div class="a" style="left:47.0px;top:415.0px;width:20.0px;height:15.0px;background:linear-gradient(180deg,#c0c8d0,#404850 60%,#707068);"></div>
<div class="a" style="left:19.0px;top:444.0px;width:38.0px;height:6.0px;background:#5bd080;border-radius:50%"></div>
<div class="a" style="left:22.0px;top:453.0px;width:7.0px;height:6.0px;background:linear-gradient(90deg,#f4c430,rgba(255,240,200,.4));"></div><div class="a" style="left:20.0px;top:458.0px;width:6.0px;height:5.0px;background:linear-gradient(225deg,#f03030,rgba(255,220,220,.3));"></div><div class="a" style="left:24.0px;top:459.0px;width:6.0px;height:5.0px;background:linear-gradient(90deg,#3a3ad0,#7a5ad8);"></div><div class="a" style="left:25.5px;top:452.0px;width:0.8px;height:12.0px;background:#333;"></div><div class="a" style="left:21.0px;top:461.5px;width:9.0px;height:0.8px;background:#333;"></div>
<div class="a" style="left:39.0px;top:456.0px;width:23.0px;height:5.0px;background:#2828c0;border-radius:50%"></div>
<div class="a" style="left:33.0px;top:465.0px;width:28.0px;height:24.0px;background:linear-gradient(180deg,#3a2a20 0%,#c0a080 45%,#806040 70%,#3a2818 100%);"></div>
<div class="a" style="left:62.0px;top:467.0px;width:46.0px;height:19.0px;background:#fffef0;border:1px solid #e0dca0"></div>
<div class="a" style="left:64.0px;top:469.0px;width:42.0px;height:1.2px;background:repeating-linear-gradient(90deg,#555 0 2.2px,transparent 2.2px 2.8px);"></div><div class="a" style="left:64.0px;top:471.6px;width:42.0px;height:1.2px;background:repeating-linear-gradient(90deg,#555 0 2.2px,transparent 2.2px 2.8px);"></div><div class="a" style="left:64.0px;top:474.2px;width:42.0px;height:1.2px;background:repeating-linear-gradient(90deg,#555 0 2.2px,transparent 2.2px 2.8px);"></div><div class="a" style="left:64.0px;top:476.8px;width:42.0px;height:1.2px;background:repeating-linear-gradient(90deg,#555 0 2.2px,transparent 2.2px 2.8px);"></div><div class="a" style="left:64.0px;top:479.4px;width:42.0px;height:1.2px;background:repeating-linear-gradient(90deg,#555 0 2.2px,transparent 2.2px 2.8px);"></div><div class="a" style="left:64.0px;top:482.0px;width:27.3px;height:1.2px;background:repeating-linear-gradient(90deg,#555 0 2.2px,transparent 2.2px 2.8px);"></div>
<div class="a" style="left:22.0px;top:540.0px;width:7.0px;height:6.0px;background:linear-gradient(90deg,#f4c430,rgba(255,240,200,.4));"></div><div class="a" style="left:20.0px;top:545.0px;width:6.0px;height:5.0px;background:linear-gradient(225deg,#f03030,rgba(255,220,220,.3));"></div><div class="a" style="left:24.0px;top:546.0px;width:6.0px;height:5.0px;background:linear-gradient(90deg,#3a3ad0,#7a5ad8);"></div><div class="a" style="left:25.5px;top:539.0px;width:0.8px;height:12.0px;background:#333;"></div><div class="a" style="left:21.0px;top:548.5px;width:9.0px;height:0.8px;background:#333;"></div>
<div class="a" style="left:32.0px;top:535.5px;width:23.0px;height:5.0px;background:#2828c0;border-radius:50%"></div>
<div class="a" style="left:63.0px;top:539.0px;width:30.0px;height:1.0px;background:repeating-linear-gradient(90deg,#888 0 2.2px,transparent 2.2px 2.8px);"></div><div class="a" style="left:63.0px;top:544.0px;width:30.0px;height:1.0px;background:repeating-linear-gradient(90deg,#888 0 2.2px,transparent 2.2px 2.8px);"></div><div class="a" style="left:63.0px;top:549.0px;width:19.5px;height:1.0px;background:repeating-linear-gradient(90deg,#888 0 2.2px,transparent 2.2px 2.8px);"></div>
<div class="a" style="left:28.0px;top:545.0px;width:31.0px;height:25.0px;background:#fffef0;border:1px solid #e0dca0"></div>
<div class="a" style="left:30.0px;top:548.0px;width:27.0px;height:1.0px;background:repeating-linear-gradient(90deg,#777 0 2.2px,transparent 2.2px 2.8px);"></div><div class="a" style="left:30.0px;top:550.6px;width:27.0px;height:1.0px;background:repeating-linear-gradient(90deg,#777 0 2.2px,transparent 2.2px 2.8px);"></div><div class="a" style="left:30.0px;top:553.2px;width:27.0px;height:1.0px;background:repeating-linear-gradient(90deg,#777 0 2.2px,transparent 2.2px 2.8px);"></div><div class="a" style="left:30.0px;top:555.8px;width:27.0px;height:1.0px;background:repeating-linear-gradient(90deg,#777 0 2.2px,transparent 2.2px 2.8px);"></div><div class="a" style="left:30.0px;top:558.4px;width:27.0px;height:1.0px;background:repeating-linear-gradient(90deg,#777 0 2.2px,transparent 2.2px 2.8px);"></div><div class="a" style="left:30.0px;top:561.0px;width:27.0px;height:1.0px;background:repeating-linear-gradient(90deg,#777 0 2.2px,transparent 2.2px 2.8px);"></div><div class="a" style="left:30.0px;top:563.6px;width:27.0px;height:1.0px;background:repeating-linear-gradient(90deg,#777 0 2.2px,transparent 2.2px 2.8px);"></div><div class="a" style="left:30.0px;top:566.2px;width:17.6px;height:1.0px;background:repeating-linear-gradient(90deg,#777 0 2.2px,transparent 2.2px 2.8px);"></div>
<div class="a" style="left:58.0px;top:565.0px;width:52.0px;height:38.0px;background:linear-gradient(180deg,#88b0e0 0%,#a8c4e8 30%,#c8ccc8 38%,#8a9a90 60%,#7a7a80 85%,#908880 100%);"></div>
<div class="a" style="left:58.0px;top:576.0px;width:52.0px;height:15.0px;background:repeating-linear-gradient(90deg,#d6dad6 0 2px,#a8b4ac 2px 6px);"></div>
<svg class="a" style="left:80px;top:537px" width="20" height="22" viewBox="0 0 20 22"><path d="M2 1 L2 17 L6 13 L10 21 L13 19.5 L9 12 L15 12 Z" fill="#b8e030" stroke="#3a4a10" stroke-width="1.2"/></svg>
<div class="a" style="left:25.0px;top:598.0px;width:10.0px;height:10.0px;background:#f4f4f4;border-radius:50%;border:1px solid #e8c0b0"></div>
<div class="a t" style="left:27.5px;top:599.5px;font-size:5px;color:#e08a6a;">▶</div>
<div class="a" style="left:98.0px;top:597.0px;width:12.0px;height:12.0px;background:#eb8a68;border-radius:50%"></div>
<div class="a t" style="left:100.5px;top:596.5px;font-size:10px;color:#fff;font-weight:bold">+</div>
<div class="a" style="left:32.0px;top:621.5px;width:23.0px;height:5.0px;background:#2828c0;border-radius:50%"></div>
<div class="a" style="left:22.0px;top:625.0px;width:7.0px;height:6.0px;background:linear-gradient(90deg,#f4c430,rgba(255,240,200,.4));"></div><div class="a" style="left:20.0px;top:630.0px;width:6.0px;height:5.0px;background:linear-gradient(225deg,#f03030,rgba(255,220,220,.3));"></div><div class="a" style="left:24.0px;top:631.0px;width:6.0px;height:5.0px;background:linear-gradient(90deg,#3a3ad0,#7a5ad8);"></div><div class="a" style="left:25.5px;top:624.0px;width:0.8px;height:12.0px;background:#333;"></div><div class="a" style="left:21.0px;top:633.5px;width:9.0px;height:0.8px;background:#333;"></div>
<div class="a" style="left:36.0px;top:631.0px;width:30.0px;height:20.0px;background:linear-gradient(180deg,#c0ccd8,#708090 50%,#3a4250);"></div>
<div class="a" style="left:68.0px;top:619.0px;width:36.0px;height:24.0px;background:linear-gradient(90deg,#6a5848,#a89070 40%,#5a4838 70%,#8a7058);"></div>
<div class="a" style="left:28.0px;top:654.0px;width:79.0px;height:13.0px;background:#fffee8;border:1px solid #e0dc98"></div>
<div class="a" style="left:30.0px;top:656.0px;width:75.0px;height:1.1px;background:repeating-linear-gradient(90deg,#777 0 2.2px,transparent 2.2px 2.8px);"></div><div class="a" style="left:30.0px;top:658.6px;width:75.0px;height:1.1px;background:repeating-linear-gradient(90deg,#777 0 2.2px,transparent 2.2px 2.8px);"></div><div class="a" style="left:30.0px;top:661.2px;width:75.0px;height:1.1px;background:repeating-linear-gradient(90deg,#777 0 2.2px,transparent 2.2px 2.8px);"></div><div class="a" style="left:30.0px;top:663.8px;width:48.8px;height:1.1px;background:repeating-linear-gradient(90deg,#777 0 2.2px,transparent 2.2px 2.8px);"></div>
<div class="a" style="left:55.0px;top:667.0px;width:26.0px;height:4.0px;background:#c8a848;"></div>
<div class="a" style="left:16.0px;top:672.0px;width:104.0px;height:11.0px;background:#f3f4f6;"></div>
<div class="a t" style="left:60.0px;top:671.0px;font-size:12px;color:#666;">+</div>
<div class="a" style="left:258px;top:173px;width:660px;height:495px;background:#fff;border:1px solid #d8d8d8"></div>
<div class="a" style="left:289px;top:252px;width:45px;height:32px;background:linear-gradient(90deg,#f6c420 0%,#f6c62a 45%,rgba(250,230,160,0.6) 75%,rgba(255,255,255,0) 100%)"></div>
<div class="a" style="left:297px;top:283px;width:37px;height:34px;background:linear-gradient(90deg,#2b2fd6 0%,#3236d8 55%,rgba(120,120,230,0.5) 80%,rgba(255,255,255,0) 100%)"></div>
<div class="a" style="left:268px;top:278px;width:40px;height:29px;background:linear-gradient(215deg,#f02a2a 0%,#f06868 35%,rgba(250,200,200,0.6) 70%,rgba(255,255,255,0) 100%)"></div>
<div class="a" style="left:314.2px;top:245px;width:2.6px;height:76px;background:#1c1c2a"></div>
<div class="a" style="left:290px;top:302px;width:44px;height:2.2px;background:#1c1c2a"></div>
<div class="a" style="left:536px;top:301.5px;width:328px;height:2px;background:linear-gradient(90deg,#b8b8b8,#c8c8c8 70%,rgba(255,255,255,0))"></div>
<div class="a" style="left:355px;top:224px;width:149px;height:34px;border-radius:50%;background:#1a1fd6;border:1px solid #1515b0"></div>
<div class="a" style="left:383px;top:233px;font-size:15px;font-weight:bold;color:#fff;line-height:18px">冬宫</div>
<div class="a" style="left:334px;top:285px;width:202px;height:166px;background:#fff;border:1.5px solid #efeabc"></div>
<div class="a tb" style="left:350px;top:290.0px;width:179px;text-align:justify;text-align-last:justify;">冬宫在彼得时期已经是俄罗</div>
<div class="a tb" style="left:341px;top:307.4px;width:188px;text-align:justify;text-align-last:justify;">斯君王的主要官邸。它曾经</div>
<div class="a tb" style="left:341px;top:324.8px;width:188px;text-align:justify;text-align-last:justify;">多次重建，甚至改变过宫址</div>
<div class="a tb" style="left:341px;top:342.2px;width:188px;text-align:justify;text-align-last:justify;">，直到伊丽莎白·彼得罗夫娜</div>
<div class="a tb" style="left:341px;top:359.6px;width:188px;text-align:justify;text-align-last:justify;">最终决定将它建成为一座新</div>
<div class="a tb" style="left:341px;top:377.0px;width:188px;text-align:justify;text-align-last:justify;">的、奢华至极的皇家大宫殿</div>
<div class="a tb" style="left:341px;top:394.4px;width:188px;text-align:justify;text-align-last:justify;">。女皇在一封信中写到：这</div>
<div class="a tb" style="left:341px;top:411.8px;width:188px;text-align:justify;text-align-last:justify;">座宫殿将显示<span class="q" style="text-align:right;text-align-last:right">“</span>俄罗斯的帝</div>
<div class="a tb" style="left:341px;top:429.2px;letter-spacing:0.7px;">王威仪<span class="q" style="text-align:left;text-align-last:left">”</span>。</div>
<div class="a sf" style="left:559px;top:254px">俄罗斯最大的宫殿</div>
<div class="a sf" style="left:545px;top:280px">俄罗斯最大的博物馆——艾尔米塔日。</div>
<div class="a sf" style="left:561px;top:315px">弗朗西斯科·拉斯特雷利设计建造</div>
<div class="a" style="left:888.5px;top:637.5px;font-size:13px;font-weight:bold;color:#2a2a2a;line-height:16px">9</div>
<svg class="a" style="left:521px;top:416px;filter:blur(0.45px)" width="342" height="256" viewBox="0 0 342 256">
<defs><linearGradient id="sky" x1="0.3" y1="0.5" x2="0.7" y2="0"><stop offset="0" stop-color="#bccfee"/><stop offset="0.6" stop-color="#a3c1eb"/><stop offset="1" stop-color="#8db3e7"/></linearGradient>
<linearGradient id="gnd" x1="0" y1="0" x2="0" y2="1"><stop offset="0" stop-color="#5e6270"/><stop offset="0.5" stop-color="#7c7b84"/><stop offset="1" stop-color="#a39c98"/></linearGradient></defs>
<rect width="342" height="256" fill="url(#sky)"/>
<polygon fill="#7a9685" points="0.0,75.0 142.0,92.0 174.0,77.0 203.0,99.3 342.0,116.0 342.0,216.0 0.0,216.0"/>
<polygon fill="#b9c2bd" points="0.0,77.0 342.0,118.0 342.0,121.0 0.0,94.0"/>
<polygon fill="#d8dcd8" points="0.0,77.0 342.0,118.0 342.0,122.0 0.0,81.0"/>
<polygon fill="#cdd2ce" points="142,95.0 174,77 205,102.6"/>
<polygon fill="#8fa096" points="150,95.0 174,81 197,100.6"/>
<rect x="6.0" y="66.6" width="4.5" height="11.1" fill="#4a5651"/>
<rect x="20.0" y="67.4" width="4.9" height="12.0" fill="#4a5651"/>
<rect x="36.0" y="69.6" width="4.8" height="11.7" fill="#4a5651"/>
<rect x="52.0" y="75.1" width="3.9" height="8.1" fill="#4a5651"/>
<rect x="70.0" y="72.7" width="4.3" height="12.7" fill="#4a5651"/>
<rect x="88.0" y="75.0" width="3.2" height="12.5" fill="#4a5651"/>
<rect x="100.0" y="78.6" width="3.5" height="10.3" fill="#4a5651"/>
<rect x="118.0" y="80.4" width="4.1" height="10.7" fill="#4a5651"/>
<rect x="132.0" y="84.8" width="3.4" height="8.1" fill="#4a5651"/>
<rect x="145.0" y="85.0" width="4.8" height="9.4" fill="#4a5651"/>
<rect x="158.0" y="84.1" width="3.3" height="11.8" fill="#4a5651"/>
<rect x="196.0" y="88.5" width="3.3" height="12.0" fill="#4a5651"/>
<rect x="208.0" y="90.8" width="3.3" height="11.1" fill="#4a5651"/>
<rect x="222.0" y="95.6" width="4.7" height="8.0" fill="#4a5651"/>
<rect x="238.0" y="96.5" width="3.4" height="9.0" fill="#4a5651"/>
<rect x="252.0" y="94.3" width="4.7" height="12.9" fill="#4a5651"/>
<rect x="266.0" y="99.4" width="4.9" height="9.4" fill="#4a5651"/>
<rect x="280.0" y="99.9" width="4.4" height="10.7" fill="#4a5651"/>
<rect x="296.0" y="103.5" width="4.9" height="9.0" fill="#4a5651"/>
<rect x="312.0" y="103.0" width="4.9" height="11.5" fill="#4a5651"/>
<rect x="326.0" y="103.6" width="3.6" height="12.5" fill="#4a5651"/>
<rect x="336.0" y="107.5" width="3.3" height="9.8" fill="#4a5651"/>
<rect x="56.0" y="70.7" width="14" height="13.0" fill="#7e948a"/>
<rect x="96.0" y="77.5" width="12" height="11.0" fill="#7e948a"/>
<rect x="112.0" y="79.4" width="12" height="11.0" fill="#7e948a"/>
<rect x="200.0" y="91.0" width="10" height="10.0" fill="#7e948a"/>
<rect x="232.0" y="95.8" width="10" height="9.0" fill="#7e948a"/>
<ellipse cx="322" cy="110" rx="6" ry="6.5" fill="#d4ac3a"/><rect x="321.2" y="96" width="1.6" height="9" fill="#d4ac3a"/>
<path d="M13.9 119.1 V108.5 A5.1 5.1 0 0 1 24.1 108.5 V119.1 Z" fill="#dde1dd"/>
<path d="M15.5 117.4 V109.3 A3.5 3.5 0 0 1 22.5 109.3 V117.4 Z" fill="#a9b1ac"/>
<path d="M13.0 157.1 V132.3 A6.0 6.0 0 0 1 25.0 132.3 V157.1 Z" fill="#e2e5e2"/>
<path d="M14.9 155.1 V133.3 A4.1 4.1 0 0 1 23.1 133.3 V155.1 Z" fill="#b9b3ae"/>
<path d="M37.5 120.3 V110.0 A5.0 5.0 0 0 1 47.5 110.0 V120.3 Z" fill="#dde1dd"/>
<path d="M39.1 118.7 V110.8 A3.4 3.4 0 0 1 45.9 110.8 V118.7 Z" fill="#a9b1ac"/>
<path d="M36.6 157.2 V133.2 A5.9 5.9 0 0 1 48.4 133.2 V157.2 Z" fill="#e2e5e2"/>
<path d="M38.5 155.3 V134.1 A4.0 4.0 0 0 1 46.5 134.1 V155.3 Z" fill="#b9b3ae"/>
<path d="M61.0 121.5 V111.6 A5.0 5.0 0 0 1 71.0 111.6 V121.5 Z" fill="#dde1dd"/>
<path d="M62.6 119.9 V112.4 A3.4 3.4 0 0 1 69.4 112.4 V119.9 Z" fill="#a9b1ac"/>
<path d="M60.2 157.3 V134.1 A5.8 5.8 0 0 1 71.8 134.1 V157.3 Z" fill="#e2e5e2"/>
<path d="M62.0 155.4 V135.0 A4.0 4.0 0 0 1 70.0 135.0 V155.4 Z" fill="#b9b3ae"/>
<path d="M80.1 122.4 V112.8 A4.9 4.9 0 0 1 89.9 112.8 V122.4 Z" fill="#dde1dd"/>
<path d="M81.7 120.8 V113.6 A3.3 3.3 0 0 1 88.3 113.6 V120.8 Z" fill="#a9b1ac"/>
<path d="M79.2 157.4 V134.8 A5.8 5.8 0 0 1 90.8 134.8 V157.4 Z" fill="#e2e5e2"/>
<path d="M81.1 155.5 V135.7 A3.9 3.9 0 0 1 88.9 135.7 V155.5 Z" fill="#b9b3ae"/>
<path d="M99.2 123.4 V114.1 A4.8 4.8 0 0 1 108.8 114.1 V123.4 Z" fill="#dde1dd"/>
<path d="M100.7 121.8 V114.9 A3.3 3.3 0 0 1 107.3 114.9 V121.8 Z" fill="#a9b1ac"/>
<path d="M98.3 157.5 V135.5 A5.7 5.7 0 0 1 109.7 135.5 V157.5 Z" fill="#e2e5e2"/>
<path d="M100.1 155.7 V136.4 A3.9 3.9 0 0 1 107.9 136.4 V155.7 Z" fill="#b9b3ae"/>
<path d="M126.3 124.7 V115.9 A4.7 4.7 0 0 1 135.7 115.9 V124.7 Z" fill="#dde1dd"/>
<path d="M127.8 123.2 V116.6 A3.2 3.2 0 0 1 134.2 116.6 V123.2 Z" fill="#a9b1ac"/>
<path d="M125.4 157.6 V136.6 A5.6 5.6 0 0 1 136.6 136.6 V157.6 Z" fill="#e2e5e2"/>
<path d="M127.2 155.8 V137.4 A3.8 3.8 0 0 1 134.8 137.4 V155.8 Z" fill="#b9b3ae"/>
<path d="M184.4 127.7 V119.7 A4.6 4.6 0 0 1 193.6 119.7 V127.7 Z" fill="#dde1dd"/>
<path d="M185.9 126.2 V120.4 A3.1 3.1 0 0 1 192.1 120.4 V126.2 Z" fill="#a9b1ac"/>
<path d="M183.6 157.9 V138.8 A5.4 5.4 0 0 1 194.4 138.8 V157.9 Z" fill="#e2e5e2"/>
<path d="M185.4 156.2 V139.6 A3.6 3.6 0 0 1 192.6 139.6 V156.2 Z" fill="#b9b3ae"/>
<path d="M205.5 128.7 V121.1 A4.5 4.5 0 0 1 214.5 121.1 V128.7 Z" fill="#dde1dd"/>
<path d="M207.0 127.3 V121.8 A3.0 3.0 0 0 1 213.0 121.8 V127.3 Z" fill="#a9b1ac"/>
<path d="M204.7 158.0 V139.5 A5.3 5.3 0 0 1 215.3 139.5 V158.0 Z" fill="#e2e5e2"/>
<path d="M206.4 156.3 V140.4 A3.6 3.6 0 0 1 213.6 140.4 V156.3 Z" fill="#b9b3ae"/>
<path d="M227.6 129.8 V122.6 A4.4 4.4 0 0 1 236.4 122.6 V129.8 Z" fill="#dde1dd"/>
<path d="M229.0 128.4 V123.3 A3.0 3.0 0 0 1 235.0 123.3 V128.4 Z" fill="#a9b1ac"/>
<path d="M226.8 158.1 V140.4 A5.2 5.2 0 0 1 237.2 140.4 V158.1 Z" fill="#e2e5e2"/>
<path d="M228.5 156.4 V141.2 A3.5 3.5 0 0 1 235.5 141.2 V156.4 Z" fill="#b9b3ae"/>
<path d="M240.1 130.5 V123.4 A4.4 4.4 0 0 1 248.9 123.4 V130.5 Z" fill="#dde1dd"/>
<path d="M241.5 129.1 V124.1 A3.0 3.0 0 0 1 247.5 124.1 V129.1 Z" fill="#a9b1ac"/>
<path d="M239.4 158.1 V140.9 A5.1 5.1 0 0 1 249.6 140.9 V158.1 Z" fill="#e2e5e2"/>
<path d="M241.0 156.5 V141.7 A3.5 3.5 0 0 1 248.0 141.7 V156.5 Z" fill="#b9b3ae"/>
<path d="M252.7 131.1 V124.2 A4.3 4.3 0 0 1 261.3 124.2 V131.1 Z" fill="#dde1dd"/>
<path d="M254.1 129.7 V124.9 A2.9 2.9 0 0 1 259.9 124.9 V129.7 Z" fill="#a9b1ac"/>
<path d="M251.9 158.2 V141.3 A5.1 5.1 0 0 1 262.1 141.3 V158.2 Z" fill="#e2e5e2"/>
<path d="M253.5 156.6 V142.1 A3.5 3.5 0 0 1 260.5 142.1 V156.6 Z" fill="#b9b3ae"/>
<path d="M267.7 131.9 V125.2 A4.3 4.3 0 0 1 276.3 125.2 V131.9 Z" fill="#dde1dd"/>
<path d="M269.1 130.5 V125.9 A2.9 2.9 0 0 1 274.9 125.9 V130.5 Z" fill="#a9b1ac"/>
<path d="M267.0 158.3 V141.9 A5.0 5.0 0 0 1 277.0 141.9 V158.3 Z" fill="#e2e5e2"/>
<path d="M268.6 156.7 V142.7 A3.4 3.4 0 0 1 275.4 142.7 V156.7 Z" fill="#b9b3ae"/>
<path d="M281.8 132.6 V126.1 A4.2 4.2 0 0 1 290.2 126.1 V132.6 Z" fill="#dde1dd"/>
<path d="M283.1 131.2 V126.8 A2.9 2.9 0 0 1 288.9 126.8 V131.2 Z" fill="#a9b1ac"/>
<path d="M281.0 158.3 V142.4 A5.0 5.0 0 0 1 291.0 142.4 V158.3 Z" fill="#e2e5e2"/>
<path d="M282.6 156.7 V143.2 A3.4 3.4 0 0 1 289.4 143.2 V156.7 Z" fill="#b9b3ae"/>
<path d="M294.8 133.2 V127.0 A4.2 4.2 0 0 1 303.2 127.0 V133.2 Z" fill="#dde1dd"/>
<path d="M296.2 131.9 V127.7 A2.8 2.8 0 0 1 301.8 127.7 V131.9 Z" fill="#a9b1ac"/>
<path d="M294.1 158.4 V142.9 A4.9 4.9 0 0 1 303.9 142.9 V158.4 Z" fill="#e2e5e2"/>
<path d="M295.7 156.8 V143.7 A3.3 3.3 0 0 1 302.3 143.7 V156.8 Z" fill="#b9b3ae"/>
<path d="M313.9 134.2 V128.3 A4.1 4.1 0 0 1 322.1 128.3 V134.2 Z" fill="#dde1dd"/>
<path d="M315.2 132.9 V128.9 A2.8 2.8 0 0 1 320.8 128.9 V132.9 Z" fill="#a9b1ac"/>
<path d="M313.2 158.5 V143.6 A4.8 4.8 0 0 1 322.8 143.6 V158.5 Z" fill="#e2e5e2"/>
<path d="M314.7 156.9 V144.4 A3.3 3.3 0 0 1 321.3 144.4 V156.9 Z" fill="#b9b3ae"/>
<path d="M323.9 134.7 V128.9 A4.1 4.1 0 0 1 332.1 128.9 V134.7 Z" fill="#dde1dd"/>
<path d="M325.2 133.4 V129.6 A2.8 2.8 0 0 1 330.8 129.6 V133.4 Z" fill="#a9b1ac"/>
<path d="M323.2 158.5 V144.0 A4.8 4.8 0 0 1 332.8 144.0 V158.5 Z" fill="#e2e5e2"/>
<path d="M324.7 157.0 V144.8 A3.3 3.3 0 0 1 331.3 144.8 V157.0 Z" fill="#b9b3ae"/>
<path d="M13.0 207.0 V183.0 A6.0 6.0 0 0 1 25.0 183.0 V207.0 Z" fill="#e2e5e2"/>
<path d="M14.9 205.1 V184.0 A4.1 4.1 0 0 1 23.1 184.0 V205.1 Z" fill="#b9b3ae"/>
<path d="M36.6 207.0 V182.9 A5.9 5.9 0 0 1 48.4 182.9 V207.0 Z" fill="#e2e5e2"/>
<path d="M38.5 205.1 V183.9 A4.0 4.0 0 0 1 46.5 183.9 V205.1 Z" fill="#b9b3ae"/>
<path d="M60.2 207.0 V182.8 A5.8 5.8 0 0 1 71.8 182.8 V207.0 Z" fill="#e2e5e2"/>
<path d="M62.0 205.1 V183.8 A4.0 4.0 0 0 1 70.0 183.8 V205.1 Z" fill="#b9b3ae"/>
<path d="M79.2 207.0 V182.8 A5.8 5.8 0 0 1 90.8 182.8 V207.0 Z" fill="#e2e5e2"/>
<path d="M81.1 205.2 V183.7 A3.9 3.9 0 0 1 88.9 183.7 V205.2 Z" fill="#b9b3ae"/>
<path d="M98.3 207.0 V182.7 A5.7 5.7 0 0 1 109.7 182.7 V207.0 Z" fill="#e2e5e2"/>
<path d="M100.1 205.2 V183.6 A3.9 3.9 0 0 1 107.9 183.6 V205.2 Z" fill="#b9b3ae"/>
<path d="M226.8 207.0 V182.2 A5.2 5.2 0 0 1 237.2 182.2 V207.0 Z" fill="#e2e5e2"/>
<path d="M228.5 205.3 V183.0 A3.5 3.5 0 0 1 235.5 183.0 V205.3 Z" fill="#b9b3ae"/>
<path d="M239.4 207.0 V182.1 A5.1 5.1 0 0 1 249.6 182.1 V207.0 Z" fill="#e2e5e2"/>
<path d="M241.0 205.4 V183.0 A3.5 3.5 0 0 1 248.0 183.0 V205.4 Z" fill="#b9b3ae"/>
<path d="M251.9 207.0 V182.1 A5.1 5.1 0 0 1 262.1 182.1 V207.0 Z" fill="#e2e5e2"/>
<path d="M253.5 205.4 V182.9 A3.5 3.5 0 0 1 260.5 182.9 V205.4 Z" fill="#b9b3ae"/>
<path d="M267.0 207.0 V182.0 A5.0 5.0 0 0 1 277.0 182.0 V207.0 Z" fill="#e2e5e2"/>
<path d="M268.6 205.4 V182.8 A3.4 3.4 0 0 1 275.4 182.8 V205.4 Z" fill="#b9b3ae"/>
<path d="M281.0 207.0 V182.0 A5.0 5.0 0 0 1 291.0 182.0 V207.0 Z" fill="#e2e5e2"/>
<path d="M282.6 205.4 V182.8 A3.4 3.4 0 0 1 289.4 182.8 V205.4 Z" fill="#b9b3ae"/>
<path d="M294.1 207.0 V181.9 A4.9 4.9 0 0 1 303.9 181.9 V207.0 Z" fill="#e2e5e2"/>
<path d="M295.7 205.4 V182.7 A3.3 3.3 0 0 1 302.3 182.7 V205.4 Z" fill="#b9b3ae"/>
<path d="M313.2 207.0 V181.8 A4.8 4.8 0 0 1 322.8 181.8 V207.0 Z" fill="#e2e5e2"/>
<path d="M314.7 205.4 V182.6 A3.3 3.3 0 0 1 321.3 182.6 V205.4 Z" fill="#b9b3ae"/>
<path d="M323.2 207.0 V181.8 A4.8 4.8 0 0 1 332.8 181.8 V207.0 Z" fill="#e2e5e2"/>
<path d="M324.7 205.5 V182.6 A3.3 3.3 0 0 1 331.3 182.6 V205.5 Z" fill="#b9b3ae"/>
<path d="M120.5 216.0 V185.0 A12.5 12.5 0 0 1 145.5 185.0 V216.0 Z" fill="#e2e5e2"/>
<path d="M122.0 216.0 V186.5 A11.0 11.0 0 0 1 144.0 186.5 V216.0 Z" fill="#36342e"/>
<path d="M158.5 216.0 V188.0 A15.5 15.5 0 0 1 189.5 188.0 V216.0 Z" fill="#e2e5e2"/>
<path d="M160.0 216.0 V189.5 A14.0 14.0 0 0 1 188.0 189.5 V216.0 Z" fill="#36342e"/>
<path d="M201.5 216.0 V183.0 A10.5 10.5 0 0 1 222.5 183.0 V216.0 Z" fill="#e2e5e2"/>
<path d="M203.0 216.0 V184.5 A9.0 9.0 0 0 1 221.0 184.5 V216.0 Z" fill="#36342e"/>
<polygon fill="#dfe3df" points="0.0,92.0 342.0,119.0 342.0,125.0 0.0,98.0"/>
<polygon fill="#c9cfcb" points="0.0,120.1 342.0,136.6 342.0,138.2 0.0,122.8"/>
<polygon fill="#e0e3e0" points="0.0,161.0 342.0,161.0 342.0,165.0 0.0,165.0"/>
<polygon fill="#c6ccc8" points="0.0,169.0 342.0,169.0 342.0,174.0 0.0,174.0"/>
<polygon fill="#b0b8b3" points="0.0,211.0 342.0,211.0 342.0,216.0 0.0,216.0"/>
<rect x="4.0" y="95.6" width="6.1" height="119.4" fill="#e4e7e6"/>
<rect x="9.0" y="95.6" width="1.0" height="119.4" fill="#c2c8c5"/>
<rect x="27.6" y="97.4" width="6.0" height="117.6" fill="#e4e7e6"/>
<rect x="32.6" y="97.4" width="1.0" height="117.6" fill="#c2c8c5"/>
<rect x="51.1" y="99.3" width="5.9" height="115.7" fill="#e4e7e6"/>
<rect x="55.9" y="99.3" width="1.0" height="115.7" fill="#c2c8c5"/>
<rect x="112.2" y="104.1" width="5.6" height="110.9" fill="#e4e7e6"/>
<rect x="116.8" y="104.1" width="1.0" height="110.9" fill="#c2c8c5"/>
<rect x="119.2" y="104.6" width="5.6" height="110.4" fill="#e4e7e6"/>
<rect x="123.8" y="104.6" width="1.0" height="110.4" fill="#c2c8c5"/>
<rect x="142.9" y="106.5" width="5.5" height="108.5" fill="#e4e7e6"/>
<rect x="147.5" y="106.5" width="1.0" height="108.5" fill="#c2c8c5"/>
<rect x="160.9" y="107.9" width="5.5" height="107.1" fill="#e4e7e6"/>
<rect x="165.3" y="107.9" width="1.0" height="107.1" fill="#c2c8c5"/>
<rect x="177.8" y="109.2" width="5.4" height="105.8" fill="#e4e7e6"/>
<rect x="182.2" y="109.2" width="1.0" height="105.8" fill="#c2c8c5"/>
<rect x="196.7" y="110.7" width="5.3" height="104.3" fill="#e4e7e6"/>
<rect x="201.1" y="110.7" width="1.0" height="104.3" fill="#c2c8c5"/>
<rect x="216.4" y="112.3" width="5.2" height="102.7" fill="#e4e7e6"/>
<rect x="220.6" y="112.3" width="1.0" height="102.7" fill="#c2c8c5"/>
<rect x="221.9" y="112.7" width="5.2" height="102.3" fill="#e4e7e6"/>
<rect x="226.1" y="112.7" width="1.0" height="102.3" fill="#c2c8c5"/>
<rect x="265.0" y="116.1" width="5.0" height="98.9" fill="#e4e7e6"/>
<rect x="269.0" y="116.1" width="1.0" height="98.9" fill="#c2c8c5"/>
<rect x="277.5" y="117.1" width="5.0" height="97.9" fill="#e4e7e6"/>
<rect x="281.5" y="117.1" width="1.0" height="97.9" fill="#c2c8c5"/>
<rect x="291.2" y="118.2" width="4.9" height="96.8" fill="#e4e7e6"/>
<rect x="295.2" y="118.2" width="1.0" height="96.8" fill="#c2c8c5"/>
<rect x="303.6" y="119.2" width="4.9" height="95.8" fill="#e4e7e6"/>
<rect x="307.4" y="119.2" width="1.0" height="95.8" fill="#c2c8c5"/>
<rect x="330.1" y="121.2" width="4.8" height="93.8" fill="#e4e7e6"/>
<rect x="333.9" y="121.2" width="1.0" height="93.8" fill="#c2c8c5"/>
<rect x="336.6" y="121.8" width="4.8" height="93.2" fill="#e4e7e6"/>
<rect x="340.4" y="121.8" width="1.0" height="93.2" fill="#c2c8c5"/>
<polygon fill="url(#gnd)" points="0.0,216.0 342.0,216.0 342.0,256.0 0.0,256.0"/>
<polygon fill="#a8a09a" points="0,241 342,234 342,246 0,251" opacity="0.5"/>
<rect x="157.5" y="26" width="1.5" height="46" fill="#555"/>
<polygon points="159,28 173,31 173,37 159,34" fill="#3b4da8"/><polygon points="159,28 173,31 173,33 159,30" fill="#e8e8f0"/><polygon points="159,33 173,36 173,39 159,36" fill="#c8383c"/>
<rect x="262" y="210" width="5" height="16" fill="#c84a3a"/>
<rect x="268" y="208" width="5" height="16" fill="#333"/>
<rect x="285" y="226" width="5" height="16" fill="#c8c8d8"/>
<rect x="158" y="212" width="5" height="16" fill="#333"/>
<rect x="150" y="218" width="5" height="16" fill="#333"/>
<rect x="276" y="222" width="5" height="16" fill="#333"/>
</svg>
<svg class="a" style="left:768px;top:6px;border-radius:6px;filter:blur(0.6px)" width="306" height="171" viewBox="0 0 306 171">
<defs><radialGradient id="wall" cx="0.55" cy="0.35" r="0.75" gradientTransform="translate(0.55 0.35) scale(1 1.6) translate(-0.55 -0.35)"><stop offset="0" stop-color="#dfe5e4"/><stop offset="0.55" stop-color="#d5dcda"/><stop offset="1" stop-color="#b9c5c0"/></radialGradient>
<clipPath id="tc"><rect width="306" height="171" rx="6" ry="6"/></clipPath></defs>
<g clip-path="url(#tc)">
<rect width="306" height="171" fill="url(#wall)"/>
<polygon fill="#2a2e2c" points="0.0,0.0 54.0,0.0 72.0,171.0 0.0,171.0"/>
<polygon fill="#7f8582" points="34.0,0.0 48.0,0.0 65.0,171.0 46.0,171.0"/>
<polygon fill="#b9bdbb" points="35.0,0.0 46.0,0.0 50.0,34.0 38.0,34.0"/>
<rect x="0.0" y="0.0" width="4.0" height="25.0" fill="#cfd3c8"/>
<rect x="4.0" y="0.0" width="8.0" height="25.0" fill="#2f4a3e"/>
<rect x="12.0" y="0.0" width="5.0" height="25.0" fill="#e5e5dd"/>
<rect x="18.0" y="0.0" width="6.0" height="25.0" fill="#a8423a"/>
<rect x="24.0" y="0.0" width="5.0" height="25.0" fill="#e8e6e0"/>
<rect x="29.0" y="0.0" width="4.0" height="25.0" fill="#3a4a44"/>
<rect x="0.0" y="25.0" width="38.0" height="5.0" fill="#1d201f"/>
<rect x="0.0" y="34.0" width="4.0" height="74.0" fill="#bdb9a6"/>
<rect x="4.0" y="40.0" width="6.0" height="68.0" fill="#8f8b78"/>
<rect x="10.0" y="34.0" width="8.0" height="74.0" fill="#9a4436"/>
<rect x="14.0" y="52.0" width="12.0" height="56.0" fill="#141618"/>
<rect x="23.0" y="34.0" width="5.0" height="74.0" fill="#d5d6da"/>
<rect x="28.0" y="36.0" width="5.0" height="72.0" fill="#3c4f90"/>
<rect x="33.0" y="38.0" width="5.0" height="70.0" fill="#1e2a4a"/>
<rect x="0.0" y="108.0" width="44.0" height="5.0" fill="#1d201f"/>
<rect x="0.0" y="116.0" width="22.0" height="55.0" fill="#b98a92"/>
<rect x="6.0" y="130.0" width="10.0" height="41.0" fill="#b0b0ac"/>
<rect x="16.0" y="126.0" width="8.0" height="45.0" fill="#1e1e1e"/>
<rect x="24.0" y="120.0" width="8.0" height="51.0" fill="#5a7a88"/>
<rect x="32.0" y="122.0" width="8.0" height="49.0" fill="#8a8678"/>
<rect x="40.0" y="128.0" width="6.0" height="43.0" fill="#5c3a36"/>
<polygon fill="#1f2322" points="47.0,0.0 54.0,0.0 72.0,171.0 63.0,171.0"/>
<polygon fill="#262a29" points="30.0,0.0 35.0,0.0 47.0,171.0 41.0,171.0"/>
<path fill="#272a2a" d="M228.0,118.0 L240.0,115.0 Q244.0,116.0 244.0,171.0 L228.0,171.0 Z"/>
<path fill="#151817" d="M118.0,171.0 C117.0,134.0 118.0,106.0 132.0,94.0 C140.0,90.0 144.0,84.0 150.0,80.0 L198.0,80.0 C207.0,88.0 222.0,94.0 228.0,106.0 L230.0,171.0 L192.0,171.0 C187.0,154.0 182.0,144.0 172.0,144.0 C162.0,144.0 157.0,154.0 152.0,171.0 L118.0,171.0 Z"/>
<rect x="152.0" y="134.0" width="40.0" height="37.0" fill="#151817"/>
<polygon fill="#ad9285" points="158.0,94.0 182.0,94.0 168.0,130.0"/>
<path fill="#d6bcae" d="M148.0,54.0 C147.0,39.0 199.0,39.0 198.0,54.0 C199.0,79.0 190.0,97.0 173.0,98.0 C156.0,97.0 147.0,79.0 148.0,54.0 Z"/>
<ellipse cx="173.0" cy="88.0" rx="5.5" ry="2" fill="#9a6e66"/>
<path fill="#161616" d="M140.0,72.0 C135.0,39.0 152.0,22.0 173.0,22.0 C194.0,22.0 210.0,39.0 204.0,72.0 L198.0,73.0 C198.0,60.0 195.0,52.0 188.0,50.0 C178.0,48.0 168.0,49.0 160.0,51.0 L153.0,54.0 C149.0,58.0 148.0,64.0 147.0,73.0 L140.0,72.0 Z"/>
<rect x="150.0" y="61.0" width="20" height="10" rx="3" fill="#cbc99e" stroke="#9a4a3c" stroke-width="1.4"/>
<rect x="174.0" y="61.0" width="20" height="10" rx="3" fill="#cbc99e" stroke="#9a4a3c" stroke-width="1.4"/>
<path fill="none" stroke="#d8dcd8" stroke-width="1.3" d="M150.0,76.0 C154.0,104.0 160.0,144.0 177.0,171.0 C177.0,171.0 177.0,171.0 177.0,171.0"/>
<path fill="none" stroke="#d8dcd8" stroke-width="1.3" d="M195.0,76.0 C198.0,114.0 192.0,144.0 180.0,171.0"/>
<rect x="0" y="146.0" width="54" height="25" fill="rgba(20,20,20,0.25)"/>
<rect x="8.0" y="151.0" width="6" height="10" rx="3" fill="#3cc86a"/>
<path d="M6.0,158.0 Q11.0,167.0 16.0,158.0" fill="none" stroke="#e8e8e8" stroke-width="1.2"/>
<rect x="10.4" y="163.0" width="1.2" height="3" fill="#e8e8e8"/>
</g>
</svg>
<div class="a" style="left:789px;top:157px;font-size:14px;line-height:16px;color:#f2f2f2">张冰</div>
<div class="a" style="left:1026px;top:670px;width:42px;height:42px;border-radius:4px;background:rgba(35,35,35,0.78)"></div>
<svg class="a" style="left:1026px;top:670px" width="42" height="42" viewBox="0 0 42 42">
<path d="M23.8 11.1 H27.9 Q30.9 11.1 30.9 14.1 V27.7 Q30.9 30.7 27.9 30.7 H13.5 Q10.5 30.7 10.5 27.7 V22.6" fill="none" stroke="#f4f4f4" stroke-width="1.9"/>
<polygon points="15.8,13.7 23.8,21.7 25.3,26.8 20.2,25.3 12.2,17.3" fill="#f4f4f4"/>
<line x1="10.6" y1="12.1" x2="12.2" y2="13.7" stroke="#f4f4f4" stroke-width="4.6" stroke-linecap="round"/>
</svg>
<div class="a" style="left:953px;top:728.5px;width:46px;height:46px;border-radius:50%;background:#262626"></div>
<svg class="a" style="left:953px;top:728.5px" width="46" height="46" viewBox="0 0 46 46">
<rect x="18.5" y="9.5" width="9" height="17" rx="4.5" fill="#d8d4d4"/>
<path d="M15.5 22 Q15.5 31 23 31 Q30.5 31 30.5 22" fill="none" stroke="#d8d4d4" stroke-width="1.6"/>
<rect x="22.2" y="31" width="1.6" height="5" fill="#d8d4d4"/>
<rect x="17.5" y="35.5" width="11" height="1.6" fill="#d8d4d4"/>
<path d="M13 34.5 L32.5 13" stroke="#1e1e1e" stroke-width="3.6"/>
<path d="M13 34.5 L32.5 13" stroke="#8c4a3a" stroke-width="2"/>
</svg>
</div>
</body></html>
